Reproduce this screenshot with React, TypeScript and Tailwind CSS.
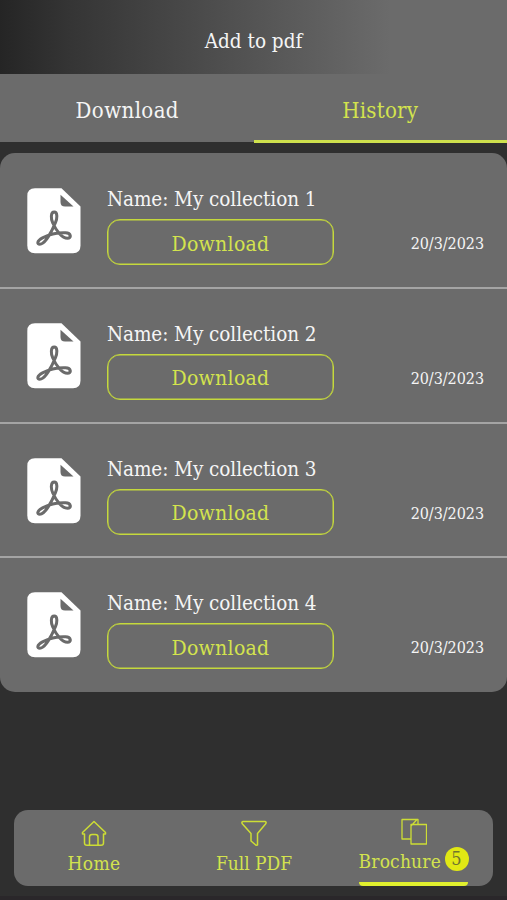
const collections = [1, 2, 3, 4];

function PdfIcon() {
  return (
    <svg width="54" height="66" viewBox="0 0 54 66" className="ml-[27px] mt-[34px] shrink-0">
      <path fill="#fff" d="M8 .3H34.5L53.5 18.5V57.5Q53.5 65.3 46 65.3H8Q.3 65.3 .3 57.5V8Q.3 .3 8 .3Z" />
      <path fill="#6b6b6b" d="M33.5 6.8L46.5 18.5H38Q33.5 18.5 33.5 14Z" />
      <path
        fill="none"
        stroke="#6b6b6b"
        strokeWidth="3"
        strokeLinecap="round"
        strokeLinejoin="round"
        d="M27.200 24C23.500 24 23.800 31 25.800 35C29 42.500 35 50.200 40.500 50.200C44.800 50.200 44.300 45 38.500 44.800C30.500 44.500 22 46.500 15.500 49.800C9.500 53 10 56.300 12.800 56.300C17.800 56.300 24.500 44 28.300 35C30.300 31 30.800 24 27.200 24Z"
      />
    </svg>
  );
}

function CollectionRow({ number }: { number: number }) {
  return (
    <li className="flex h-[134.8px] border-b-2 border-[#a4a4a4] last:border-b-0">
      <PdfIcon />
      <div className="ml-[26px] w-[227px] shrink-0 pt-[31px]">
        <p className="h-[34px] whitespace-nowrap text-[20.5px] leading-[28px] tracking-[-0.08px]">Name: My collection {number}</p>
        <button className="flex h-[46px] w-[227px] items-center justify-center rounded-[13px] border border-[#c5d93c] pt-[3px] text-[21px] leading-[44px] tracking-[0.3px] text-[#d3e34e] shadow-[inset_0_0_0_0.5px_#c5d93c]">
          Download
        </button>
      </div>
      <time className="ml-auto mr-[23px] mt-[78px] text-[16px] leading-[24px] tracking-[-0.05px]">20/3/2023</time>
    </li>
  );
}

export default function App() {
  return (
    <div className="flex h-[900px] w-[507px] flex-col overflow-hidden bg-[#2f2f2f] font-['DejaVu_Serif_Condensed','DejaVu_Serif',serif] text-[#f5f5f5] [font-stretch:condensed]">
      <header className="flex h-[74px] shrink-0 items-center justify-center bg-[linear-gradient(90deg,#252525_0%,#353535_14%,#6b6b6b_77%)] pt-[9px] text-[20.5px] tracking-[0px]">
        Add to pdf
      </header>
      <nav className="grid h-[69px] shrink-0 grid-cols-2 text-[22px] leading-[66px]">
        <button className="flex h-[68px] items-center justify-center bg-[#6b6b6b] pl-px pt-[5px] tracking-[0.4px]">Download</button>
        <button className="flex h-[69px] items-center justify-center border-b-[3px] border-[#cfe14d] bg-[#6b6b6b] pt-[7px] tracking-[0.25px] text-[#d3e34e]">
          History
        </button>
      </nav>
      <ul className="mt-[10px] h-[539px] shrink-0 overflow-hidden rounded-[15px] bg-[#6b6b6b] pt-px">
        {collections.map((number) => (
          <CollectionRow key={number} number={number} />
        ))}
      </ul>
      <nav className="mx-[14px] mt-[118px] flex h-[76px] shrink-0 rounded-[14px] bg-[#6b6b6b] text-[19px] leading-[24px] text-[#d3e34e]">
        <button className="flex w-[160px] flex-col items-center pt-[10px]">
          <svg width="26" height="28" viewBox="0 0 26 28" fill="none" stroke="#cddd35" strokeWidth="1.5" strokeLinejoin="round" strokeLinecap="round">
            <path d="M1.500 12.500L13 1.500L24.500 12.500V14H22.500V23Q22.500 25.300 20 25.300H6Q3.500 25.300 3.500 23V14H1.500Z" />
            <path d="M8.500 25V17Q8.500 14.500 11 14.500H14.500Q17 14.500 17 17V25" />
          </svg>
          <span className="mt-[3px] tracking-[0.4px]">Home</span>
        </button>
        <button className="flex w-[160px] flex-col items-center pt-[10px]">
          <svg width="28" height="28" viewBox="0 0 28 28" fill="none" stroke="#cddd35" strokeWidth="1.5" strokeLinejoin="round">
            <path d="M3 1.500H25Q27 2 25.500 4L17.500 13.500V25L16 25.300L11 21V13.500L2.500 4Q1 2 3 1.500Z" />
          </svg>
          <span className="mt-[3px] whitespace-nowrap tracking-[-0.05px]">Full PDF</span>
        </button>
        <button className="relative flex w-[159px] flex-col items-center pt-[8px]">
          <svg width="26" height="27" viewBox="0 0 26 27" fill="none" stroke="#cddd35" strokeWidth="1.3" strokeLinejoin="round">
            <path d="M10 21H1V1.500H17V6M10 21V8L16 1.500M10 6.500H25.500V26H10Z" />
          </svg>
          <span className="flex h-[27px] w-[110px] items-center">
            <span className="w-[86px] pt-[4px] text-left leading-[24px] tracking-[0.2px]">Brochure</span>
            <span className="flex size-[24px] items-center justify-center rounded-full bg-[#e1e814] text-[18px] leading-[24px] text-[#70752d]">5</span>
          </span>
          <span className="absolute bottom-0 left-[25px] h-[4px] w-[109px] rounded-b-[4px] bg-[#e1f02e]" />
        </button>
      </nav>
      <div className="mt-auto h-[4px] bg-[#2a272a]" />
    </div>
  );
}
